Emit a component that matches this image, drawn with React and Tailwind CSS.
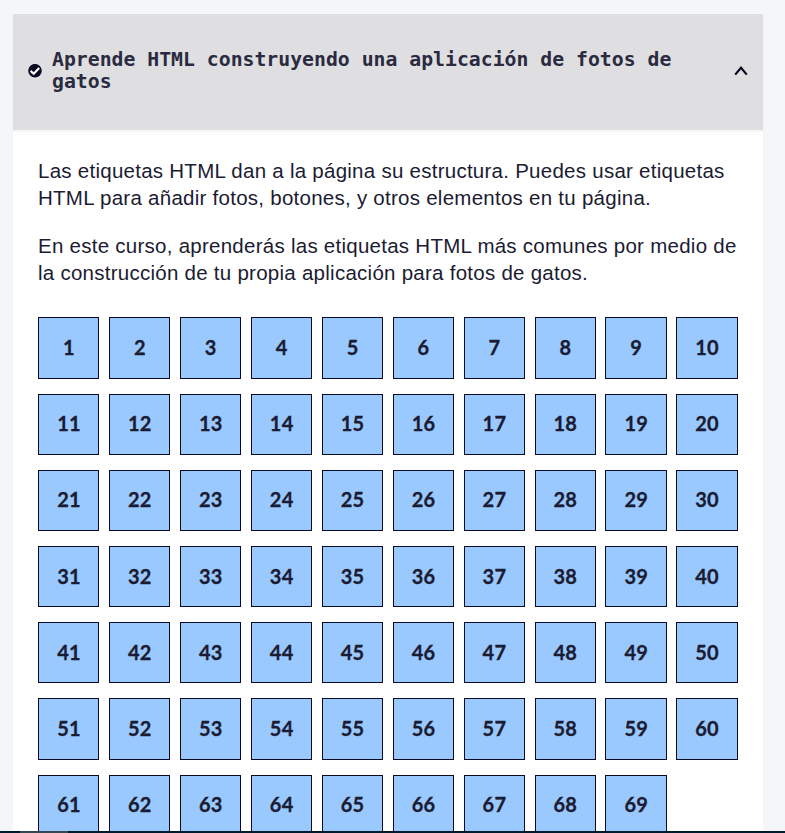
const steps = Array.from({ length: 69 }, (_, i) => i + 1);

function CheckIcon() {
  return (
    <svg viewBox="0 0 14 14" className="h-3.5 w-3.5 shrink-0" aria-hidden="true">
      <circle cx="7" cy="6.7" r="6.8" fill="#0a0a23" />
      <path d="M2.6 6.9 5.7 9.7 11.2 4" fill="none" stroke="#fff" strokeWidth="2.1" />
    </svg>
  );
}

function ChevronIcon() {
  return (
    <svg viewBox="0 0 14 10" className="h-2.5 w-3.5 shrink-0" aria-hidden="true">
      <path d="M1.2 8.6 7 1.8 12.8 8.6" fill="none" stroke="#0a0a23" strokeWidth="2.2" />
    </svg>
  );
}

export default function App() {
  return (
    <div className="flex h-[833px] w-[785px] flex-col overflow-hidden bg-[#f5f6f7] text-[#1b1b32]">
      <main className="ml-[13px] mt-3.5 flex min-h-0 w-[750px] flex-1 flex-col gap-0.5 overflow-hidden">
        <button className="flex h-[116px] w-full shrink-0 items-center bg-[#dfdfe1] pl-[15px] pr-[15px] pb-[2px] text-left">
          <CheckIcon />
          <h3 className="ml-[10px] w-[640px] font-['DejaVu_Sans_Mono',monospace] text-[19.8px] font-bold leading-[22px] text-[#2a2a40]">
            Aprende HTML construyendo una aplicación de fotos de gatos
          </h3>
          <span className="ml-auto">
            <ChevronIcon />
          </span>
        </button>
        <section className="min-h-0 flex-1 bg-white pl-[25px] pt-[25px]">
          <div className="flex flex-col gap-[21px] font-['Liberation_Sans',Arial,sans-serif] text-[20.5px] leading-[27px] tracking-[0.26px]">
            <p>
              Las etiquetas HTML dan a la página su estructura. Puedes usar etiquetas
              <br />
              HTML para añadir fotos, botones, y otros elementos en tu página.
            </p>
            <p>
              En este curso, aprenderás las etiquetas HTML más comunes por medio de
              <br />
              la construcción de tu propia aplicación para fotos de gatos.
            </p>
          </div>
          <ol className="ml-[0.18px] mt-[31.4px] grid grid-cols-[repeat(10,61.25px)] gap-x-[9.66px] gap-y-[15px]">
            {steps.map((n) => (
              <li
                key={n}
                className="flex h-[61.2px] items-center justify-center border border-[#0a0a23] bg-[#99c9ff] pb-[2px] pl-[0.3px] font-['Lato',sans-serif] text-[20px] font-bold tracking-[0.2px] [-webkit-text-stroke:0.3px_#1b1b32]"
              >
                {n}
              </li>
            ))}
          </ol>
        </section>
      </main>
      <footer className="flex h-0.5 shrink-0 bg-[#001b2c]">
        <span className="ml-5 w-12 bg-[#33484f]" />
      </footer>
    </div>
  );
}
